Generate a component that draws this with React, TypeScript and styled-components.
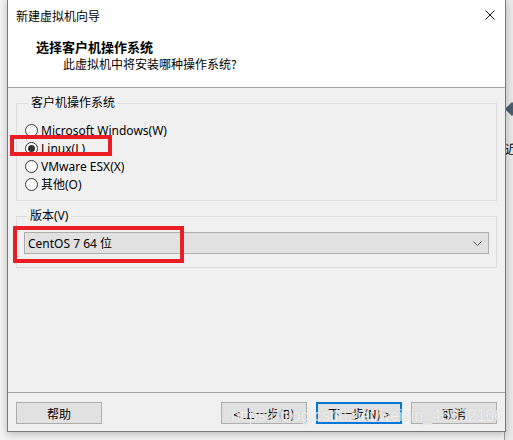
import * as React from 'react';
import styled, { createGlobalStyle } from 'styled-components';

const GlobalStyle = createGlobalStyle`
    html, body {
        margin: 0;
        padding: 0;
        background: #f4f4f4;
        width: 513px;
        height: 440px;
        overflow: hidden;
    }
    body {
        font-family: "Noto Sans", "Noto Sans CJK SC", sans-serif;
        font-size: 12px;
        color: #000;
    }
`;

const Desktop = styled.div`
    position: relative;
    width: 513px;
    height: 440px;
    overflow: hidden;
`;

// strip of the app behind the dialog, peeking out at the right
const BackApp = styled.div`
    position: absolute;
    top: 0;
    right: 0;
    width: 8px;
    height: 440px;
    background: #eaeaea;
    border-left: 1px solid #9a9a9a;
`;

const BackMarker = styled.div`
    position: absolute;
    top: 104px;
    left: 2px;
    width: 10px;
    height: 10px;
    background: #4a5d6e;
    transform: rotate(45deg);
`;

const BackGlyph = styled.span`
    position: absolute;
    top: 140px;
    left: 0;
    font-family: "Noto Sans CJK SC", sans-serif;
    font-size: 12px;
`;

const Dialog = styled.div`
    position: relative;
    margin-left: 7px;
    width: 497px;
    height: 431px;
    border: 1px solid #7a7a7a;
    border-top: none;
    background: #f0f0f0;
    box-shadow: 0 2px 8px rgba(0, 0, 0, 0.25);
    display: flex;
    flex-direction: column;
`;

const Header = styled.div`
    background: #fff;
    height: 87px;
    border-bottom: 1px solid #a0a0a0;
    display: flex;
    flex-direction: column;
`;

const TitleBar = styled.div`
    height: 30px;
    display: flex;
    align-items: center;
    justify-content: space-between;
    padding-left: 8px;
    padding-right: 10px;
    font-family: "Noto Sans CJK SC", sans-serif;
    font-size: 12px;
`;

const CloseIcon = () => (
    <svg width="10" height="10" viewBox="0 0 10 10">
        <path d="M0.5 0.5 L9.5 9.5 M9.5 0.5 L0.5 9.5" stroke="#111" strokeWidth="1" />
    </svg>
);

const Heading = styled.div`
    margin-top: 9px;
    padding-left: 28px;
    font-family: "Noto Sans CJK SC", sans-serif;
    font-size: 13px;
    font-weight: bold;
    line-height: 16px;
`;

const SubHeading = styled.div`
    margin-top: 1px;
    padding-left: 55px;
    font-family: "Noto Sans CJK SC", sans-serif;
    font-size: 12px;
    line-height: 16px;
`;

const Body = styled.div`
    flex: 1;
    padding: 7px 8px 0 8px;
    display: flex;
    flex-direction: column;
`;

const Group = styled.fieldset<{ $pad: string }>`
    margin: 0;
    border: 1px solid #dcdcdc;
    padding: ${(p) => p.$pad};
    min-width: 0;
`;

const GroupLabel = styled.legend`
    padding: 0 3px;
    margin-left: 3px;
    line-height: 16px;
    font-family: "Noto Sans", "Noto Sans CJK SC", sans-serif;
`;

const RadioRow = styled.label`
    display: flex;
    align-items: center;
    height: 18px;
    gap: 3px;
`;

const RadioMark = styled.span<{ $on: boolean }>`
    box-sizing: border-box;
    width: 13px;
    height: 13px;
    border-radius: 50%;
    border: 1px solid #333;
    background: #fff;
    display: flex;
    align-items: center;
    justify-content: center;
    &::after {
        content: '';
        width: 7px;
        height: 7px;
        border-radius: 50%;
        background: ${(p) => (p.$on ? '#333' : 'transparent')};
    }
`;

const Select = styled.div`
    height: 20px;
    border: 1px solid #adadad;
    background: #e1e1e1;
    display: flex;
    align-items: center;
    justify-content: space-between;
    padding: 0 6px 0 3px;
`;

const Chevron = () => (
    <svg width="9" height="5" viewBox="0 0 9 5">
        <path d="M0.5 0.5 L4.5 4.5 L8.5 0.5" stroke="#555" strokeWidth="1" fill="none" />
    </svg>
);

const Spacer = styled.div`
    flex: 1;
`;

const Footer = styled.div`
    border-top: 1px solid #a0a0a0;
    height: 39px;
    padding: 9px 8px 0 8px;
    box-sizing: border-box;
    display: flex;
    gap: 9px;
    font-family: "Noto Sans CJK SC", "Noto Sans", sans-serif;
`;

const Button = styled.div<{ $primary?: boolean; $pushRight?: boolean }>`
    box-sizing: border-box;
    width: 86px;
    height: 22px;
    border: ${(p) => (p.$primary ? '2px solid #0078d7' : '1px solid #adadad')};
    background: #e1e1e1;
    display: flex;
    align-items: center;
    justify-content: center;
    margin-left: ${(p) => (p.$pushRight ? 'auto' : '0')};
`;

// red annotation frames drawn over the dialog
const Callout = styled.div<{ $x: number; $y: number; $w: number; $h: number }>`
    position: absolute;
    left: ${(p) => p.$x}px;
    top: ${(p) => p.$y}px;
    width: ${(p) => p.$w}px;
    height: ${(p) => p.$h}px;
    box-sizing: border-box;
    border: 4px solid #ea1c24;
    pointer-events: none;
`;

const Watermark = styled.div`
    position: absolute;
    left: 231px;
    top: 407px;
    font-family: "Liberation Sans", sans-serif;
    font-size: 16px;
    color: rgba(255, 255, 255, 0.75);
    text-shadow: 0 0 1px rgba(120, 120, 120, 0.35);
    pointer-events: none;
    white-space: nowrap;
`;

const options = ['Microsoft Windows(W)', 'Linux(L)', 'VMware ESX(X)', '其他(O)'];

const App: React.FunctionComponent = () => {
    const [picked, setPicked] = React.useState(1);
    return (
        <Desktop>
            <GlobalStyle />
            <BackApp>
                <BackMarker />
                <BackGlyph>近</BackGlyph>
            </BackApp>
            <Dialog>
                <Header>
                    <TitleBar>
                        <span>新建虚拟机向导</span>
                        <CloseIcon />
                    </TitleBar>
                    <Heading>选择客户机操作系统</Heading>
                    <SubHeading>此虚拟机中将安装哪种操作系统?</SubHeading>
                </Header>
                <Body>
                    <Group $pad="10px 8px 7px 8px">
                        <GroupLabel>客户机操作系统</GroupLabel>
                        {options.map((o, i) => (
                            <RadioRow key={o} onClick={() => setPicked(i)}>
                                <RadioMark $on={picked === i} />
                                <span>{o}</span>
                            </RadioRow>
                        ))}
                    </Group>
                    <Group $pad="8px 7px 13px 7px" style={{ marginTop: 7 }}>
                        <GroupLabel>版本(V)</GroupLabel>
                        <Select>
                            <span>CentOS 7 64 位</span>
                            <Chevron />
                        </Select>
                    </Group>
                    <Spacer />
                </Body>
                <Footer>
                    <Button>帮助</Button>
                    <Button $pushRight>&lt; 上一步(B)</Button>
                    <Button $primary>下一步(N) &gt;</Button>
                    <Button>取消</Button>
                </Footer>
            </Dialog>
            <Callout $x={10} $y={135} $w={102} $h={21} />
            <Callout $x={13} $y={226} $w={171} $h={37} />
            <Watermark>https://blog.csdn.net/weixin_46632106</Watermark>
        </Desktop>
    );
};

export default App;
